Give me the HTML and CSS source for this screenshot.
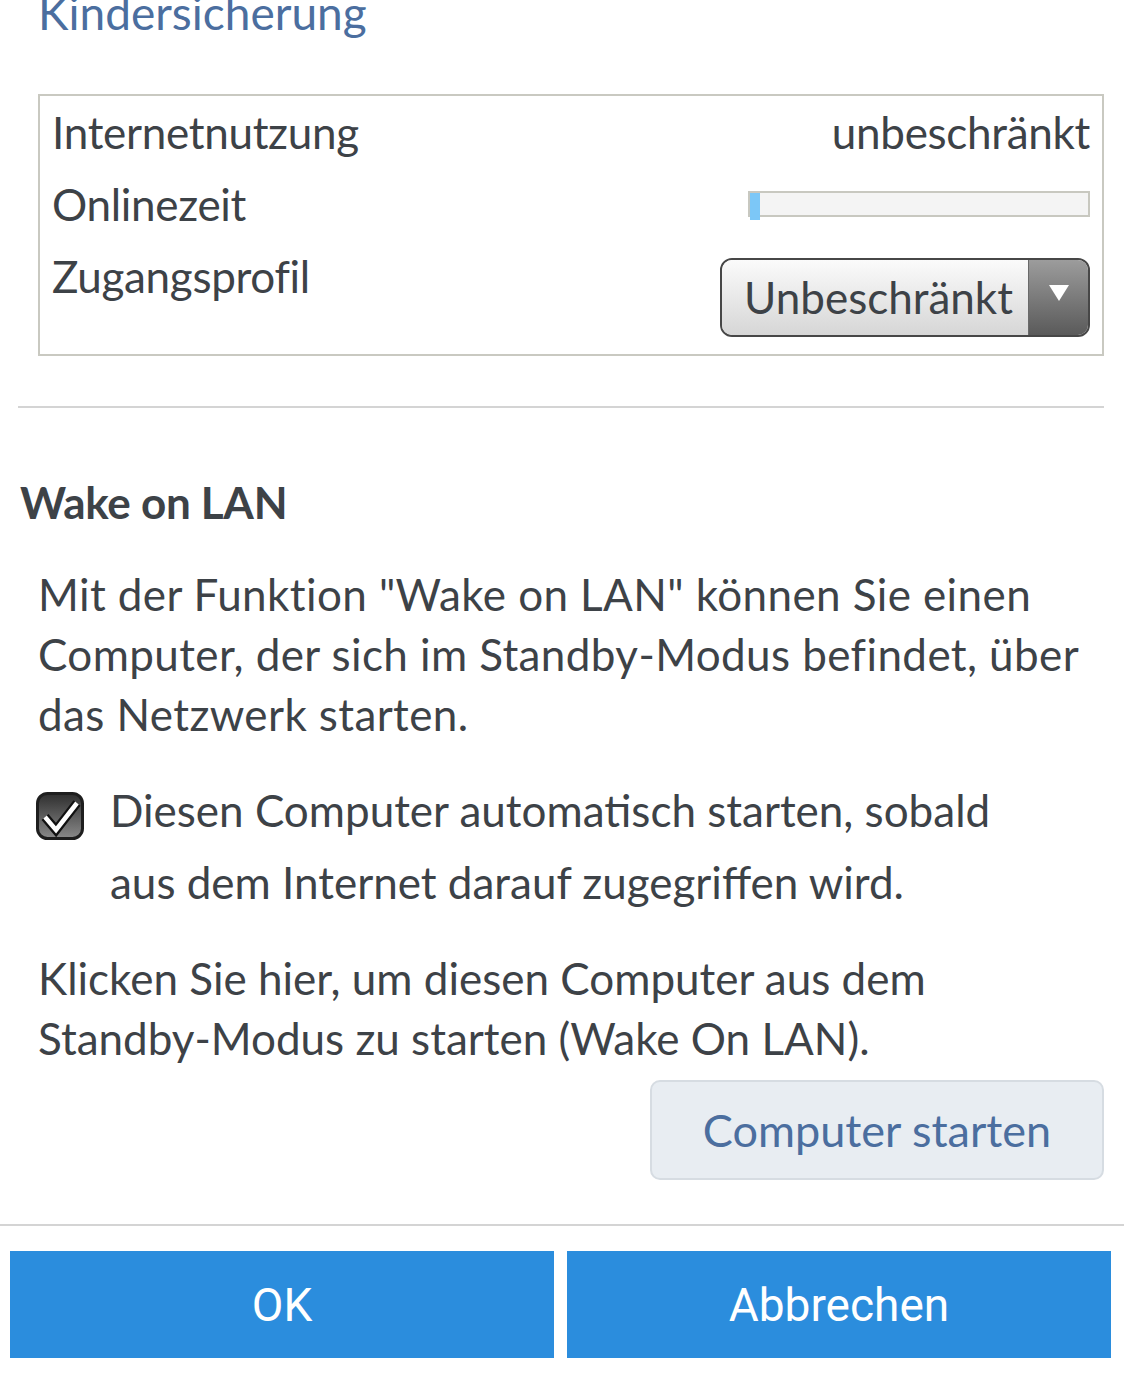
FILE: index.html
```html
<!DOCTYPE html>
<html lang="de">
<head>
<meta charset="utf-8">
<link rel="stylesheet" href="styles.css">
</head>
<body>
<main class="page">
  <section class="section">
    <h2 class="subhead">Kindersicherung</h2>
    <div class="infobox">
      <div class="row">
        <span class="label">Internetnutzung</span>
        <span class="value">unbeschränkt</span>
      </div>
      <div class="row row-center">
        <span class="label">Onlinezeit</span>
        <div class="bar"><div class="bar-fill"></div></div>
      </div>
      <div class="row row-select">
        <span class="label">Zugangsprofil</span>
        <div class="select">
          <span class="select-text">Unbeschränkt</span>
          <span class="select-arrow">
            <svg width="22" height="18" viewBox="0 0 22 18"><path d="M1 1 H21 L11 17 Z" fill="#fff"/></svg>
          </span>
        </div>
      </div>
    </div>
    <hr class="divider">
    <h3 class="title">Wake on LAN</h3>
    <p class="text text-intro">Mit der Funktion "Wake on LAN" können Sie einen Computer, der sich im Standby-Modus befindet, über das Netzwerk starten.</p>
    <label class="check">
      <span class="check-box">
        <svg width="48" height="48" viewBox="0 0 48 48">
          <defs>
            <linearGradient id="cg" x1="0" y1="0" x2="0" y2="1">
              <stop offset="0" stop-color="#2e2e2e"/>
              <stop offset="1" stop-color="#8a8a8a"/>
            </linearGradient>
          </defs>
          <rect x="1.5" y="1.5" width="45" height="45" rx="10" fill="url(#cg)" stroke="#1e1e1e" stroke-width="3"/>
          <path d="M9 25 L20 38 L41 11" fill="none" stroke="#111" stroke-width="9" stroke-linejoin="miter" stroke-linecap="butt"/>
          <path d="M9 25 L20 38 L41 11" fill="none" stroke="#fff" stroke-width="4.5" stroke-linejoin="miter" stroke-linecap="butt"/>
        </svg>
      </span>
      <span class="check-label">Diesen Computer automatisch starten, sobald aus dem Internet darauf zugegriffen wird.</span>
    </label>
    <p class="text text-klick">Klicken Sie hier, um diesen Computer aus dem Standby-Modus zu starten (Wake On LAN).</p>
    <div class="btn-row">
      <button class="btn-light" type="button">Computer starten</button>
    </div>
  </section>
  <hr class="divider-full">
  <div class="actions">
    <button class="btn-primary" type="button">OK</button>
    <button class="btn-primary" type="button">Abbrechen</button>
  </div>
</main>
</body>
</html>
```
FILE: styles.css
```css
html, body {
  margin: 0;
  padding: 0;
  background: #fff;
}
body {
  font-family: "Lato", "Source Sans Pro", "Liberation Sans", sans-serif;
  color: #3d4247;
  font-size: 44px;
  overflow: hidden;
}
.page {
  width: 1124px;
  height: 1379px;
}
.section {
  padding: 0 20px 0 18px;
}
.subhead {
  margin: -17px 0 0 20px;
  height: 111px;
  font-weight: 400;
  font-size: 46px;
  line-height: 60px;
  color: #4b6e9f;
}
.infobox {
  margin-left: 20px;
  border: 2px solid #c9c9c1;
  padding: 0 12px 17px 12px;
}
.row {
  display: flex;
  justify-content: space-between;
  align-items: flex-start;
  height: 72px;
  line-height: 72px;
}
.row-center {
  align-items: center;
}
.row-select {
  height: auto;
}
.label, .value {
  white-space: nowrap;
  letter-spacing: -0.3px;
}
.bar {
  width: 338px;
  height: 22px;
  border: 2px solid #c8c8c0;
  background: #f4f4f4;
  display: flex;
  align-items: flex-start;
}
.bar-fill {
  width: 10px;
  height: 27px;
  background: #7cc7f7;
  flex: none;
}
.select {
  margin-top: 18px;
  width: 366px;
  height: 75px;
  border: 2px solid #474747;
  border-radius: 12px;
  overflow: hidden;
  display: flex;
  line-height: 75px;
}
.select-text {
  flex: 1;
  padding-left: 22px;
  background: linear-gradient(#fbfbfb, #d6d6d6);
  font-size: 44px;
  color: #3d4247;
}
.select-arrow {
  width: 60px;
  background: linear-gradient(#9c9c9c, #5a5a5a);
  display: flex;
  justify-content: center;
  align-items: flex-start;
  padding-top: 24px;
  box-sizing: border-box;
  border-left: 1px solid #6a6a6a;
}
.divider {
  margin: 50px 0 0 0;
  border: 0;
  height: 2px;
  background: #d4d4d4;
}
.title {
  margin: 64px 0 0 2px;
  font-size: 44px;
  font-weight: 700;
  line-height: 60px;
  letter-spacing: -0.3px;
}
.text {
  margin: 32px 0 0 20px;
  line-height: 60px;
}
.text-intro {
  letter-spacing: 0.4px;
}
.check {
  display: flex;
  align-items: flex-start;
  margin: 30px 0 0 18px;
}
.check-box {
  flex: none;
  width: 48px;
  height: 48px;
  margin-top: 18px;
  margin-right: 26px;
  display: flex;
}
.check-label {
  line-height: 72px;
  width: 940px;
}
.text-klick {
  margin-top: 30px;
}
.btn-row {
  display: flex;
  justify-content: flex-end;
  margin-top: 12px;
}
.btn-light {
  width: 454px;
  height: 100px;
  border: 2px solid #d6dce2;
  border-radius: 10px;
  background: #e8edf2;
  color: #4b6e9f;
  font-family: inherit;
  font-size: 45px;
  padding: 0;
}
.divider-full {
  margin: 44px 0 0 0;
  border: 0;
  height: 2px;
  background: #d4d4d4;
}
.actions {
  display: flex;
  gap: 13px;
  padding: 0 13px 0 10px;
  margin-top: 25px;
}
.btn-primary {
  flex: 1;
  height: 107px;
  border: 0;
  background: #2b8ddd;
  color: #fff;
  font-family: "Roboto", sans-serif;
  font-size: 46px;
  padding: 0;
}
```
